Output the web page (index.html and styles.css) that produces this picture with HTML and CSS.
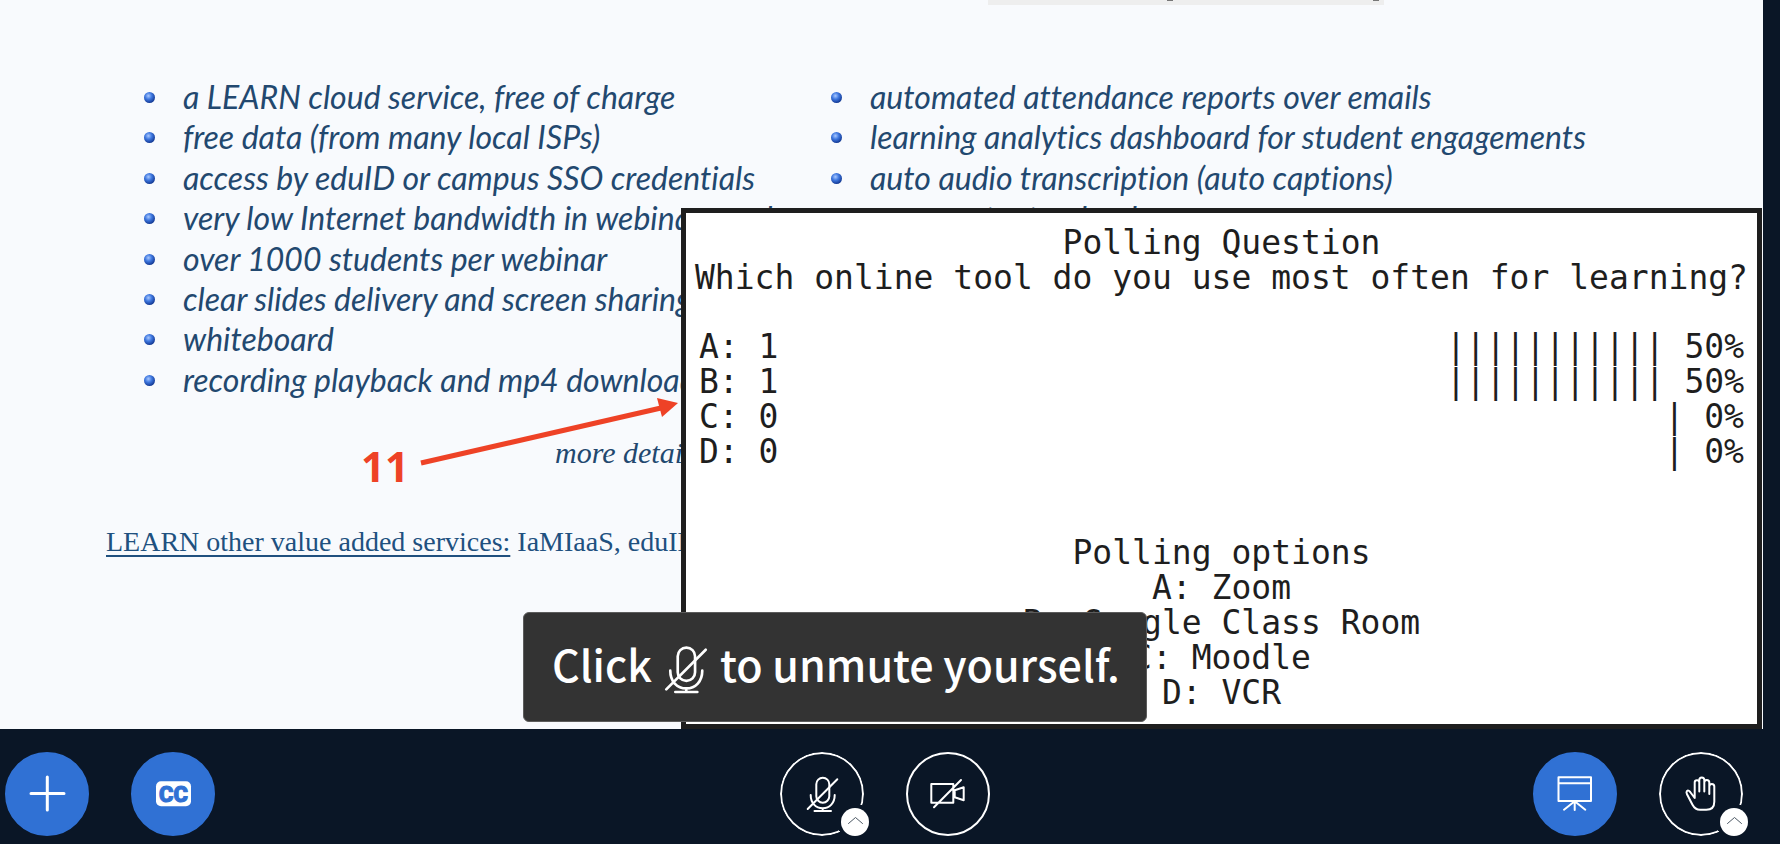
FILE: index.html
```html
<!DOCTYPE html>
<html lang="en">
<head>
<meta charset="utf-8">
<title>Webinar session</title>
<link rel="stylesheet" href="styles.css">
</head>
<body>
<svg class="defs" aria-hidden="true">
  <symbol id="mic-off" viewBox="25 23 33 37">
    <rect x="35.3" y="24.7" width="13" height="25" rx="6.5"/>
    <path d="M29.7 42c0 8 5 13.3 12 13.3S53.700 50 53.700 42M41.700 55.300V58M33.500 58H50M26.700 56L56.300 26.300"/>
  </symbol>
  <symbol id="caret" viewBox="0 0 28 28"><path d="M7.500 15.500L14.500 9.500L21.500 15.500"/></symbol>
</svg>
<main class="stage">
  <section class="slide">
    <div class="slide-tag"><i></i><i></i></div>
    <div class="columns">
      <ul class="features">
        <li>a LEARN cloud service, free of charge</li>
        <li>free data (from many local ISPs)</li>
        <li>access by eduID or campus SSO credentials</li>
        <li>very low Internet bandwidth in webinars and</li>
        <li>over 1000 students per webinar</li>
        <li>clear slides delivery and screen sharing</li>
        <li>whiteboard</li>
        <li>recording playback and mp4 downloads</li>
      </ul>
      <ul class="features">
        <li>automated attendance reports over emails</li>
        <li>learning analytics dashboard for student engagements</li>
        <li>auto audio transcription (auto captions)</li>
        <li>easy content upload</li>
      </ul>
    </div>
    <p class="more">more details</p>
    <p class="services"><u>LEARN other value added services:</u> IaMIaaS, eduID</p>

    <div class="callout">
      <span>11</span>
      <svg width="260" height="70" viewBox="0 0 260 70" aria-hidden="true">
        <path d="M2 65L242 10" stroke="#ee4226" stroke-width="5" stroke-linecap="butt"/>
        <path class="head" d="M238 0L259 5L243 19Z"/>
      </svg>
    </div>

    <section class="poll">
      <h2>Polling Question</h2>
      <p class="question">Which online tool do you use most often for learning?</p>
      <table>
        <tr><th scope="row">A: 1</th><td>||||||||||| 50%</td></tr>
        <tr><th scope="row">B: 1</th><td>||||||||||| 50%</td></tr>
        <tr><th scope="row">C: 0</th><td>| 0%</td></tr>
        <tr><th scope="row">D: 0</th><td>| 0%</td></tr>
      </table>
      <h2>Polling options</h2>
      <p>A: Zoom</p>
      <p>B: Google Class Room</p>
      <p>C: Moodle</p>
      <p>D: VCR</p>
    </section>

    <div class="toast" role="status">
      <span>Click</span>
      <svg class="toast-icon" aria-label="microphone"><use href="#mic-off"/></svg>
      <span>to unmute yourself.</span>
    </div>
  </section>
</main>
<footer class="actions">
  <div class="group">
    <button class="round filled" aria-label="Actions">
      <svg class="icon" viewBox="20 20 44 44"><path d="M26 41.500H59M42.300 25V58"/></svg>
    </button>
    <button class="round filled" aria-label="Closed captions">
      <svg class="icon" viewBox="20 20 44 44"><rect class="cc-box" x="25" y="29.300" width="35" height="25" rx="5"/><text class="cc-text" x="42.500" y="50" text-anchor="middle">CC</text></svg>
    </button>
  </div>
  <div class="group center">
    <div class="control">
      <button class="round split" aria-label="Unmute"><svg class="icon mic"><use href="#mic-off"/></svg></button>
      <button class="more-btn" aria-label="Change audio device"><svg><use href="#caret"/></svg></button>
    </div>
    <button class="round" aria-label="Share webcam">
      <svg class="icon" viewBox="20 20 44 44"><path class="thin" d="M25.300 32H47.300V50.700H25.300ZM48.700 38.300L57.700 35.300V48.300L48.700 45.300ZM28 55.300L55 28"/></svg>
    </button>
  </div>
  <div class="group right">
    <button class="round filled" aria-label="Presentation">
      <svg class="icon" viewBox="20 20 44 44"><path class="thin" d="M25.500 25.300H58V49H25.500ZM25.500 31.300H58M41.700 49.300V58M41.700 49.300L31 57.700M41.700 49.300L52.300 57.700"/></svg>
    </button>
    <div class="control">
      <button class="round split" aria-label="Raise hand">
        <svg class="icon" viewBox="20 20 44 44"><path class="thin" d="M40.300 39.500V30.500q0-2.300-2.300-2.300q-2.300 0-2.300 2.300V46l-4.500-6q-2-2.300-3.300-.8q-.9 1 .1 3l5.500 10.500q2.700 5 7.500 5h6.300q8 0 8-8V34.500q0-2.500-2.500-2.500q-2.500 0-2.500 2.500V42M40.300 31V28q0-2.500 2.500-2.500q2.500 0 2.500 2.500V39.500M45.300 30.500q0-2.500 2.500-2.500q2.500 0 2.500 2.500V36"/></svg>
      </button>
      <button class="more-btn" aria-label="More reactions"><svg><use href="#caret"/></svg></button>
    </div>
  </div>
</footer>
</body>
</html>
```
FILE: styles.css
```css
* { box-sizing: border-box; }

body {
  margin: 0;
  min-height: 100vh;
  display: flex;
  flex-direction: column;
  background: #0a1626;
  font-family: "Open Sans", sans-serif;
}

p, h2, ul { margin: 0; padding: 0; }
.defs { position: absolute; width: 0; height: 0; }

.stage { flex: 1; display: flex; padding-right: 17px; }

.slide {
  position: relative;
  flex: 1;
  overflow: hidden;
  background: #f8fafd;
  color: #22486f;
}

.slide-tag {
  display: flex;
  gap: 200px;
  width: 396px;
  height: 5px;
  margin-left: 988px;
  padding-left: 179px;
  background: #eeeeee;
}
.slide-tag i { width: 6px; height: 1px; background: #777777; }

.columns {
  display: grid;
  grid-template-columns: 687px 1fr;
  padding: 73px 0 0 144px;
}

.features {
  display: grid;
  grid-template-rows: repeat(8, 1fr);
  height: 323px;
  list-style: none;
  font: italic 32px/38px Lato, sans-serif;
  font-variant-ligatures: none;
  white-space: nowrap;
}
.features li { display: flex; align-items: flex-start; gap: 28px; }
.features li::before {
  content: "";
  width: 11px;
  height: 11px;
  margin-top: 14px;
  border-radius: 50%;
  background: radial-gradient(circle at 40% 35%, #a9c8ff 0, #3f78e0 35%, #173f9c 70%, #0b2a6b 100%);
}

.more {
  padding: 32px 0 0 555px;
  font: italic 30px/40px "Liberation Serif", serif;
}

.services {
  padding: 49px 0 0 106px;
  color: #20507f;
  font: 28px/40px "Liberation Serif", serif;
  white-space: nowrap;
}
.services u { text-decoration-thickness: 2px; text-underline-offset: 4px; }

.callout {
  position: absolute;
  left: 361px;
  top: 398px;
  display: flex;
  align-items: flex-end;
  gap: 10px;
  color: #ee4226;
  font: 700 42px/40px "Open Sans", sans-serif;
}
.callout span { margin-bottom: -18px; }
.head { fill: #ee4226; stroke: none; }

.poll {
  position: absolute;
  right: 1px;
  bottom: 0;
  width: 1081px;
  height: 521px;
  padding: 12px 9px;
  border: 5px solid #1e1e1e;
  background: #ffffff;
  color: #1e1e1e;
  font: 33px/35px "DejaVu Sans Mono", monospace;
  text-align: center;
  white-space: nowrap;
}
.poll h2 { font: inherit; }
.poll table { width: 100%; margin: 34px 0 66px; border-collapse: collapse; }
.poll th, .poll td { padding: 0 4px; font-weight: normal; text-align: left; }
.poll td { text-align: right; }

.toast {
  position: absolute;
  left: 523px;
  bottom: 7px;
  display: flex;
  align-items: center;
  gap: 12px;
  height: 110px;
  padding: 0 26px 8px 28px;
  border: 1px solid #5c5c5c;
  border-radius: 6px;
  background: #333333;
  color: #ffffff;
  font: 500 43px/60px "Noto Sans CJK SC", sans-serif;
  white-space: nowrap;
}
.toast-icon { width: 44px; height: 50px; margin-top: 14px; }

svg { fill: none; stroke: #ffffff; stroke-width: 2; stroke-linecap: round; stroke-linejoin: round; }

.actions {
  display: grid;
  grid-template-columns: 1fr auto 1fr;
  align-items: center;
  height: 115px;
  padding: 15px 5px 0;
  background: #0a1626;
}
.group { display: flex; gap: 42px; }
.center { padding-right: 10px; }
.right { justify-content: flex-end; padding-right: 32px; }
.control { position: relative; }

.round {
  display: flex;
  align-items: center;
  justify-content: center;
  width: 84px;
  height: 84px;
  padding: 0;
  border: 2px solid #ffffff;
  border-radius: 50%;
  background: transparent;
}
.filled { border-color: #3071d4; background: #3071d4; }
.split {
  -webkit-mask: radial-gradient(circle at 75px 70px, transparent 18px, #000000 18px);
  mask: radial-gradient(circle at 75px 70px, transparent 18px, #000000 18px);
}
.icon { width: 44px; height: 44px; stroke-width: 3; }
.mic { width: 33px; height: 37px; stroke-width: 2; }
.thin { stroke-width: 2; }
.cc-box { fill: #ffffff; stroke: none; }
.cc-text { fill: #3071d4; stroke: #3071d4; stroke-width: 1; font: 900 22px Roboto, sans-serif; }

.more-btn {
  position: absolute;
  right: -5px;
  bottom: 0;
  width: 28px;
  height: 28px;
  padding: 0;
  border: 0;
  border-radius: 50%;
  background: #ffffff;
}
.more-btn svg { display: block; width: 28px; height: 28px; stroke: #4e5a66; stroke-width: 1; }
```
